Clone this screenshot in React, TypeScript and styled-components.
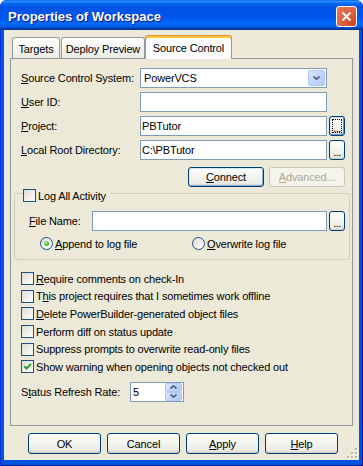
import React from 'react';
import styled, { createGlobalStyle, css } from 'styled-components';

const GlobalStyle = createGlobalStyle`
  html, body {
    margin: 0;
    padding: 0;
    background: #ffffff;
  }
  body {
    font-family: Tahoma, "Liberation Sans", Arial, sans-serif;
    font-size: 11px;
    letter-spacing: -0.15px;
    color: #000000;
  }
`;

const Window = styled.div`
  width: 363px;
  height: 466px;
  box-sizing: border-box;
  display: flex;
  flex-direction: column;
  background: #0054e3;
  border-radius: 7px 7px 0 0;
  overflow: hidden;
  box-shadow: inset 1px 0 #0831d9, inset -1px -1px #00138c;
`;

const TitleBar = styled.div`
  height: 30px;
  flex: none;
  box-sizing: border-box;
  display: flex;
  align-items: center;
  justify-content: space-between;
  padding: 3px 6px 0 8px;
  background: linear-gradient(
    to bottom,
    #0058ee 0%,
    #3593ff 4%,
    #288eff 6%,
    #127dff 8%,
    #036ffc 10%,
    #0262ee 14%,
    #0057e5 20%,
    #0054e3 24%,
    #0055eb 56%,
    #005bf5 66%,
    #026afe 76%,
    #0062ef 86%,
    #0052d6 92%,
    #0040ab 94%,
    #003092 100%
  );
`;

const Title = styled.span`
  font-family: "Liberation Sans", Arial, sans-serif;
  font-weight: bold;
  font-size: 13px;
  letter-spacing: 0;
  color: #ffffff;
  text-shadow: 1px 1px #0a1883;
`;

const CloseButton = styled.div`
  width: 21px;
  height: 21px;
  box-sizing: border-box;
  border: 1px solid #ffffff;
  border-radius: 3px;
  background: radial-gradient(circle at 85% 85%, #cc4622 0%, #dd5f3c 45%, #e77a5a 100%);
  display: flex;
  align-items: center;
  justify-content: center;
`;

const Body = styled.div`
  flex: 1;
  margin: 0 4px 6px 4px;
  padding: 4px 6px 0 6px;
  background: #ece9d8;
  display: flex;
  flex-direction: column;
  position: relative;
`;

const TabStrip = styled.div`
  height: 24px;
  flex: none;
  display: flex;
  align-items: flex-end;
  gap: 1px;
  padding-left: 2px;
`;

const Tab = styled.div<{ $active?: boolean; $w: number }>`
  width: ${p => p.$w}px;
  height: 21px;
  box-sizing: border-box;
  border: 1px solid #919b9c;
  border-bottom: none;
  border-radius: 3px 3px 0 0;
  background: linear-gradient(to bottom, #ffffff 0%, #f3f3ef 60%, #ecebe6 100%);
  display: flex;
  align-items: center;
  justify-content: center;
  padding-top: 1px;
  ${p =>
    p.$active &&
    css`
      height: 24px;
      margin-left: -1px;
      margin-bottom: -1px;
      position: relative;
      z-index: 1;
      background: #fcfcfe;
      border-top: 1px solid #e68b2c;
      box-shadow: inset 0 2px #ffc73c;
      padding-top: 0;
    `}
`;

const Panel = styled.div`
  height: 368px;
  flex: none;
  box-sizing: border-box;
  border: 1px solid #919b9c;
  padding: 9px 7px 0 10px;
  display: flex;
  flex-direction: column;
`;

const FormGrid = styled.div`
  display: grid;
  grid-template-columns: 119px 187px 18px;
  grid-auto-rows: 20px;
  row-gap: 4px;
  align-items: center;
`;

const Label = styled.span`
  white-space: nowrap;
`;

const Key = styled.u`
  text-decoration: underline;
  text-underline-offset: 1px;
`;

const Field = styled.div<{ $pad?: number }>`
  height: 20px;
  box-sizing: border-box;
  border: 1px solid #7f9db9;
  background: #ffffff;
  display: flex;
  align-items: center;
  padding-left: ${p => p.$pad ?? 1}px;
  white-space: nowrap;
  overflow: hidden;
`;

const Combo = styled(Field)`
  justify-content: space-between;
  padding-right: 1px;
`;

const ComboArrow = styled.div`
  width: 17px;
  height: 16px;
  box-sizing: border-box;
  border: 1px solid #b1c6f5;
  border-radius: 2px;
  background: linear-gradient(135deg, #dce6fd 0%, #c4d5fb 50%, #b4c8f8 100%);
  display: flex;
  align-items: center;
  justify-content: center;
`;

const XpButton = styled.button<{ $w: number; $h: number; $default?: boolean; $focus?: boolean }>`
  width: ${p => p.$w}px;
  height: ${p => p.$h}px;
  box-sizing: border-box;
  border: 1px solid #003c74;
  border-radius: 3px;
  background: linear-gradient(to bottom, #ffffff 0%, #f4f4f0 45%, #ecebe6 85%, #d6d0c5 100%);
  font: inherit;
  letter-spacing: inherit;
  color: #000000;
  padding: 0;
  display: flex;
  align-items: center;
  justify-content: center;
  position: relative;
  justify-self: end;
  ${p =>
    p.$default &&
    css`
      box-shadow: inset 1px 1px #cee7ff, inset -1px -1px #89ade4;
    `}
  ${p =>
    p.$focus &&
    css`
      box-shadow: inset 1px 1px #cee7ff, inset -1px -1px #6a8fd6;
      &::after {
        content: '';
        position: absolute;
        inset: 2px;
        border: 1px dotted #000000;
      }
    `}
  &:disabled {
    border-color: #c9c7ba;
    color: #aca899;
    background: #f5f4ea;
  }
`;

const Dots = styled.span`
  align-self: flex-end;
  margin-bottom: 3px;
  line-height: 8px;
  letter-spacing: -0.5px;
`;

const ActionRow = styled.div`
  display: flex;
  justify-content: flex-end;
  gap: 5px;
  margin-top: 7px;
`;

const Group = styled.div`
  margin: 6px -5px 0 -7px;
  border: 1px solid #d0d0bf;
  border-radius: 3px;
  padding: 0 4px 9px 14px;
  display: flex;
  flex-direction: column;
`;

const GroupHeader = styled.div`
  align-self: flex-start;
  margin: -5px 0 0 -6px;
  padding-right: 4px;
  background: #ece9d8;
  display: flex;
  align-items: center;
  gap: 2px;
  height: 13px;
`;

const FileRow = styled.div`
  display: grid;
  grid-template-columns: 63px 235px 18px;
  align-items: center;
  margin-top: 9px;
`;

const RadioRow = styled.div`
  display: grid;
  grid-template-columns: 152px 1fr;
  margin-top: 6px;
  padding-left: 11px;
  height: 13px;
`;

const Option = styled.div`
  display: flex;
  align-items: center;
  gap: 2px;
  white-space: nowrap;
`;

const Box = styled.span`
  width: 13px;
  height: 13px;
  flex: none;
  box-sizing: border-box;
  border: 1px solid #1c5180;
  background: linear-gradient(135deg, #dcdcd7 0%, #f4f4f2 70%, #ffffff 100%);
  display: flex;
  align-items: center;
  justify-content: center;
`;

const Radio = styled.span<{ $on?: boolean }>`
  width: 13px;
  height: 13px;
  flex: none;
  box-sizing: border-box;
  border: 1px solid #1c5180;
  border-radius: 50%;
  background: linear-gradient(135deg, #dcdcd7 0%, #f4f4f2 70%, #ffffff 100%);
  display: flex;
  align-items: center;
  justify-content: center;
  &::after {
    content: '';
    display: ${p => (p.$on ? 'block' : 'none')};
    width: 5px;
    height: 5px;
    border-radius: 50%;
    background: radial-gradient(circle at 35% 35%, #a8eca4 0%, #4fc54b 50%, #21a121 100%);
  }
`;

const CheckList = styled.div`
  display: flex;
  flex-direction: column;
  margin-top: 10px;
`;

const CheckRow = styled(Option)`
  height: 17.6px;
`;

const StatusRow = styled.div`
  display: grid;
  grid-template-columns: 109px 54px;
  align-items: center;
  margin-top: 6px;
`;

const Spin = styled(Field)`
  justify-content: space-between;
  padding: 0 1px 0 2px;
`;

const Stepper = styled.div`
  display: flex;
  flex-direction: column;
  width: 17px;
  height: 18px;
`;

const StepButton = styled.div`
  flex: 1;
  box-sizing: border-box;
  border: 1px solid #b1c6f5;
  border-radius: 2px;
  background: linear-gradient(135deg, #dce6fd 0%, #c4d5fb 50%, #b4c8f8 100%);
  display: flex;
  align-items: center;
  justify-content: center;
`;

const ButtonBar = styled.div`
  display: flex;
  gap: 6px;
  margin-top: 7px;
  padding-left: 18px;
`;

const Grip = styled.svg`
  position: absolute;
  right: 1px;
  bottom: 1px;
`;

const Chevron = ({ dir }: { dir: 'up' | 'down' }) => (
  <svg width="7" height="4" viewBox="0 0 7 4">
    <path
      d={dir === 'down' ? 'M0.5 0.5 L3.5 3.2 L6.5 0.5' : 'M0.5 3.5 L3.5 0.8 L6.5 3.5'}
      fill="none"
      stroke="#4d6185"
      strokeWidth="1.6"
    />
  </svg>
);

const Check = ({ checked }: { checked?: boolean }) => (
  <Box>
    {checked && (
      <svg width="9" height="9" viewBox="0 0 9 9">
        <path d="M1.2 4.2 L3.5 6.6 L8 1.8" fill="none" stroke="#21a121" strokeWidth="1.9" />
      </svg>
    )}
  </Box>
);

const Browse = ({ focus }: { focus?: boolean }) => (
  <XpButton $w={16} $h={20} $focus={focus}>
    <Dots>...</Dots>
  </XpButton>
);

const options: { key?: [string, string, string]; text?: string; checked?: boolean }[] = [
  { key: ['', 'R', 'equire comments on check-In'] },
  { key: ['T', 'h', 'is project requires that I sometimes work offline'] },
  { key: ['', 'D', 'elete PowerBuilder-generated object files'] },
  { text: 'Perform diff on status update' },
  { text: 'Suppress prompts to overwrite read-only files' },
  { text: 'Show warning when opening objects not checked out', checked: true },
];

const App = () => (
  <>
    <GlobalStyle />
    <Window>
      <TitleBar>
        <Title>Properties of Workspace</Title>
        <CloseButton>
          <svg width="11" height="11" viewBox="0 0 11 11">
            <path d="M1.5 1.5 L9.5 9.5 M9.5 1.5 L1.5 9.5" stroke="#ffffff" strokeWidth="2" />
          </svg>
        </CloseButton>
      </TitleBar>
      <Body>
        <TabStrip>
          <Tab $w={48}>Targets</Tab>
          <Tab $w={84}>Deploy Preview</Tab>
          <Tab $w={87} $active>
            Source Control
          </Tab>
        </TabStrip>
        <Panel>
          <FormGrid>
            <Label>
              <Key>S</Key>ource Control System:
            </Label>
            <Combo $pad={3}>
              PowerVCS
              <ComboArrow>
                <Chevron dir="down" />
              </ComboArrow>
            </Combo>
            <span />
            <Label>
              <Key>U</Key>ser ID:
            </Label>
            <Field />
            <span />
            <Label>
              <Key>P</Key>roject:
            </Label>
            <Field>PBTutor</Field>
            <Browse focus />
            <Label>
              <Key>L</Key>ocal Root Directory:
            </Label>
            <Field>C:\PBTutor</Field>
            <Browse />
          </FormGrid>
          <ActionRow>
            <XpButton $w={76} $h={20} $default>
              <Key>C</Key>onnect
            </XpButton>
            <XpButton $w={76} $h={20} disabled>
              <Key>A</Key>dvanced...
            </XpButton>
          </ActionRow>
          <Group>
            <GroupHeader>
              <Check />
              <span>
                Lo<Key>g</Key> All Activity
              </span>
            </GroupHeader>
            <FileRow>
              <Label>
                <Key>F</Key>ile Name:
              </Label>
              <Field />
              <Browse />
            </FileRow>
            <RadioRow>
              <Option>
                <Radio $on />
                <span>
                  <Key>A</Key>ppend to log file
                </span>
              </Option>
              <Option>
                <Radio />
                <span>
                  <Key>O</Key>verwrite log file
                </span>
              </Option>
            </RadioRow>
          </Group>
          <CheckList>
            {options.map((o, i) => (
              <CheckRow key={i}>
                <Check checked={o.checked} />
                <span>
                  {o.key ? (
                    <>
                      {o.key[0]}
                      <Key>{o.key[1]}</Key>
                      {o.key[2]}
                    </>
                  ) : (
                    o.text
                  )}
                </span>
              </CheckRow>
            ))}
          </CheckList>
          <StatusRow>
            <Label>
              S<Key>t</Key>atus Refresh Rate:
            </Label>
            <Spin>
              5
              <Stepper>
                <StepButton>
                  <Chevron dir="up" />
                </StepButton>
                <StepButton>
                  <Chevron dir="down" />
                </StepButton>
              </Stepper>
            </Spin>
          </StatusRow>
        </Panel>
        <ButtonBar>
          <XpButton $w={73} $h={21}>OK</XpButton>
          <XpButton $w={73} $h={21}>Cancel</XpButton>
          <XpButton $w={73} $h={21}>
            <Key>A</Key>pply
          </XpButton>
          <XpButton $w={73} $h={21}>
            <Key>H</Key>elp
          </XpButton>
        </ButtonBar>
        <Grip width="12" height="12" viewBox="0 0 12 12">
          {[
            [9, 1],
            [9, 5],
            [5, 5],
            [9, 9],
            [5, 9],
            [1, 9],
          ].map(([x, y]) => (
            <g key={`${x}-${y}`}>
              <rect x={x + 1} y={y + 1} width="2" height="2" fill="#ffffff" />
              <rect x={x} y={y} width="2" height="2" fill="#b9b5a1" />
            </g>
          ))}
        </Grip>
      </Body>
    </Window>
  </>
);

export default App;
